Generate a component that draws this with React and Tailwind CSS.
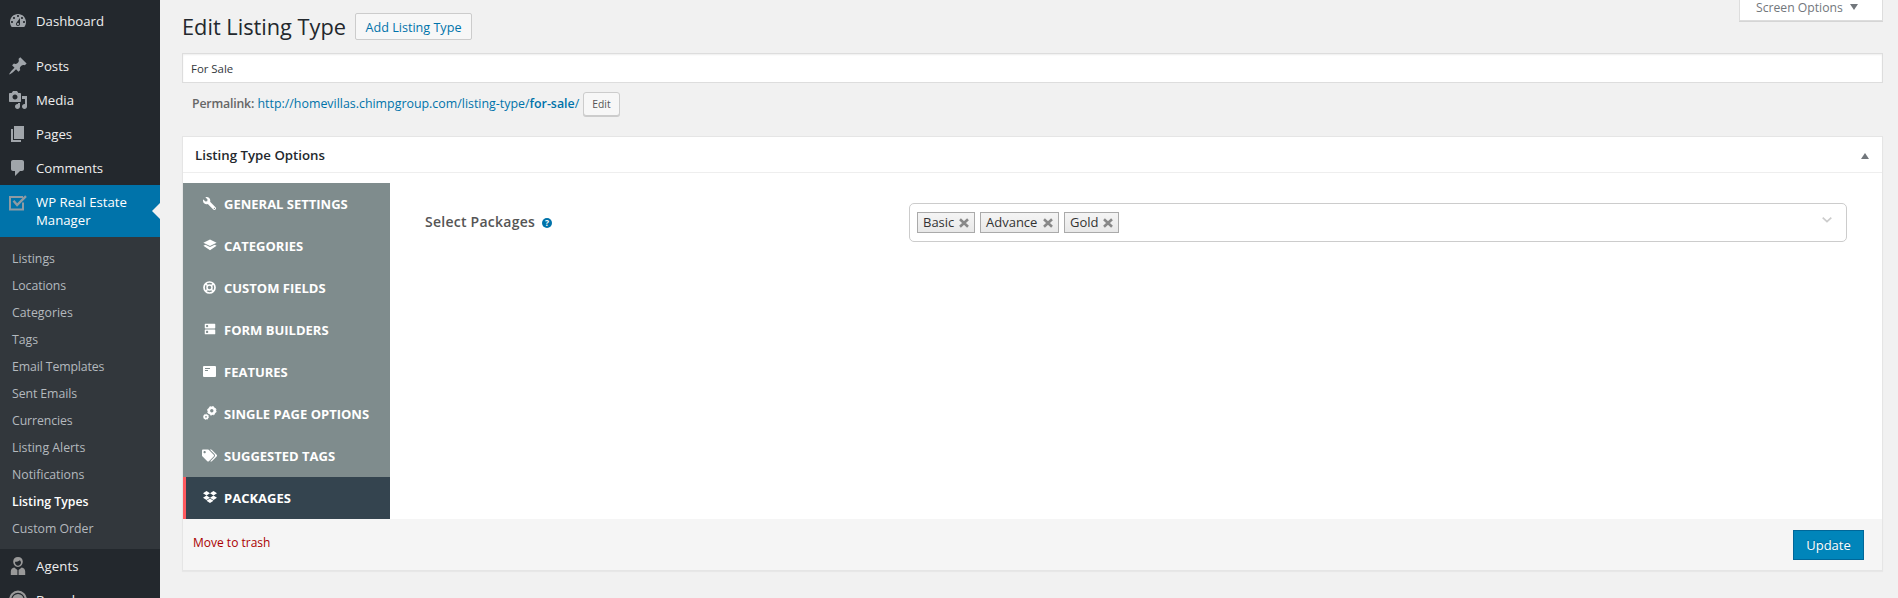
import React from "react";
import { MdDns } from "react-icons/md";
import { FaTags, FaDropbox, FaWrench } from "react-icons/fa";

const Dash = ({ d }) => (
  <svg viewBox="0 0 20 20" className="h-5 w-5 fill-[#a0a5aa]">
    <path fillRule="evenodd" d={d} />
  </svg>
);

const DASHBOARD =
  "M3.76 16h12.48c1.1-1.37 1.76-3.11 1.76-5 0-4.42-3.58-8-8-8s-8 3.58-8 8c0 1.89.66 3.63 1.76 5zM10 4c.55 0 1 .45 1 1s-.45 1-1 1-1-.45-1-1 .45-1 1-1zM6 6c.55 0 1 .45 1 1s-.45 1-1 1-1-.45-1-1 .45-1 1-1zm8 0c.55 0 1 .45 1 1s-.45 1-1 1-1-.45-1-1 .45-1 1-1zm-5.37 5.55L12 7v6c0 1.1-.9 2-2 2s-2-.9-2-2c0-.57.24-1.08.63-1.45zM4 10c.55 0 1 .45 1 1s-.45 1-1 1-1-.45-1-1 .45-1 1-1zm12 0c.55 0 1 .45 1 1s-.45 1-1 1-1-.45-1-1 .45-1 1-1zm-5 3c0-.55-.45-1-1-1s-1 .45-1 1 .45 1 1 1 1-.45 1-1z";
const PIN =
  "M10.44 3.02l1.82-1.82 6.36 6.35-1.83 1.82c-1.05-.68-2.48-.57-3.41.36l-.75.75c-.92.93-1.04 2.35-.35 3.41l-1.83 1.82-2.41-2.41-2.8 2.79c-.42.42-3.38 2.71-3.8 2.29s1.86-3.39 2.28-3.81l2.79-2.79L4.1 9.36l1.83-1.82c1.05.69 2.48.57 3.4-.36l.75-.75c.93-.92 1.05-2.35.36-3.41z";
const MEDIA =
  "M13 11V4c0-.55-.45-1-1-1h-1.67L9 1H5L3.67 3H2c-.55 0-1 .45-1 1v7c0 .55.45 1 1 1h10c.55 0 1-.45 1-1zM7 4.5c1.38 0 2.5 1.12 2.5 2.5S8.38 9.5 7 9.5 4.5 8.38 4.5 7 5.62 4.5 7 4.5zM14 6h5v10.5c0 1.38-1.12 2.5-2.5 2.5S14 17.88 14 16.5s1.12-2.5 2.5-2.5c.17 0 .34.02.5.05V9h-3V6zm-4 8.05V13h2v3.5c0 1.38-1.12 2.5-2.5 2.5S7 17.88 7 16.5 8.12 14 9.5 14c.17 0 .34.02.5.05z";
const PAGES = "M6 15V2h10v13H6zm-1 1h8v2H3V5h2v11z";
const COMMENTS =
  "M5 2h9c1.1 0 2 .9 2 2v7c0 1.1-.9 2-2 2h-2l-5 5v-5H5c-1.1 0-2-.9-2-2V4c0-1.1.9-2 2-2z";

const CheckBoxIcon = () => (
  <svg viewBox="0 0 20 20" className="h-5 w-5" fill="none" stroke="#8f9ba3">
    <path strokeWidth="2" d="M15 10.5V17.500H2V5h13" />
    <path strokeWidth="2.4" d="M5.500 8.800l3.600 4.200L18 4.2" />
  </svg>
);

const AgentIcon = () => (
  <svg viewBox="0 0 20 20" className="h-5 w-5">
    <path fill="#999" fillRule="evenodd" d="M10 1c3 0 4.8 1.8 4.8 4.6 0 3-1.900 5.400-4.800 5.400s-4.800-2.400-4.800-5.400C5.200 2.800 7 1 10 1zm-3 5.800c.3 1.600 1.500 3 3 3s2.700-1.400 3-3c.1-1-.5-2-1.200-2.600-1.300 1-3 1.500-4.600 1.600z" />
    <path fill="#999" d="M6.300 11.600L9.400 14v5H2.800v-3.500c0-2 1.400-3.500 3.500-3.900zM13.700 11.600L10.600 14v5h6.600v-3.500c0-2-1.400-3.500-3.500-3.900z" />
  </svg>
);

const BranchIcon = () => (
  <svg viewBox="0 0 20 20" className="h-5 w-5">
    <circle cx="10" cy="9.500" r="7.800" fill="none" stroke="#999" strokeWidth="2.200" />
    <circle cx="10" cy="9.500" r="5.600" fill="#999" />
  </svg>
);

const LayersIcon = () => (
  <svg viewBox="0 0 14 12" className="h-3 w-[14px]">
    <path fill="#fff" d="M7 .5L13.600 3.700 7 7 .4 3.700z" />
    <path fill="#fff" d="M.4 6.800L2.400 5.800 7 8.100l4.600-2.300 2 1L7 11.200z" />
  </svg>
);

const RingIcon = () => (
  <svg viewBox="0 0 13 13" className="h-[13px] w-[13px]" fill="none" stroke="#fff">
    <circle cx="6.500" cy="6.500" r="5.500" strokeWidth="1.700" />
    <circle cx="6.500" cy="6.500" r="2.500" strokeWidth="1.500" />
    <path strokeWidth="1.500" d="M2.500 2.500l2.200 2.200M10.500 2.500L8.300 4.700M2.500 10.500l2.200-2.200M10.500 10.500L8.300 8.300" />
  </svg>
);

const CardIcon = () => (
  <svg viewBox="0 0 13 13" className="h-[13px] w-[13px]">
    <rect y="1" width="13" height="11" rx="1" fill="#fff" />
    <path stroke="#7f8c8d" d="M2 3.500h5M2 5.500h3" />
  </svg>
);

const CogsIcon = () => (
  <svg viewBox="0 0 14 14" className="h-[14px] w-[14px]" fill="none" stroke="#fff">
    <circle cx="8.800" cy="4.800" r="3" strokeWidth="2.600" />
    <circle cx="8.800" cy="4.800" r="4.300" strokeWidth="1" strokeDasharray="1.690 1.690" />
    <circle cx="3" cy="10.800" r="1.700" strokeWidth="1.700" />
    <circle cx="3" cy="10.800" r="2.600" strokeWidth=".8" strokeDasharray="1.020 1.020" />
  </svg>
);

const TOP_ITEMS = [
  ["Posts", PIN],
  ["Media", MEDIA],
  ["Pages", PAGES],
  ["Comments", COMMENTS],
];

const SUB_ITEMS = [
  ["Listings", ""],
  ["Locations", "tracking-[-0.1px]"],
  ["Categories", ""],
  ["Tags", ""],
  ["Email Templates", "tracking-[-0.12px]"],
  ["Sent Emails", "tracking-[-0.08px]"],
  ["Currencies", "tracking-[-0.1px]"],
  ["Listing Alerts", ""],
  ["Notifications", ""],
  ["Listing Types", "font-semibold text-white"],
  ["Custom Order", ""],
];

const TABS = [
  ["General Settings", <FaWrench size={13} className="-scale-x-100" />],
  ["Categories", <LayersIcon />],
  ["Custom Fields", <RingIcon />],
  ["Form Builders", <MdDns size={14} />],
  ["Features", <CardIcon />],
  ["Single Page Options", <CogsIcon />],
  ["Suggested Tags", <FaTags size={15} />],
  ["Packages", <FaDropbox size={14} />],
];

const MenuRow = ({ icon, children }) => (
  <div className="flex h-[34px] shrink-0 items-start pl-2 text-[13.2px] leading-[18px] text-[#eee]">
    <span className="w-7 shrink-0 pt-[7px]">{icon}</span>
    <span className="pt-2">{children}</span>
  </div>
);

function Sidebar() {
  return (
    <nav className="flex w-40 shrink-0 flex-col overflow-hidden bg-[#23282d] pt-1">
      <MenuRow icon={<Dash d={DASHBOARD} />}>Dashboard</MenuRow>
      <div className="h-[11px] shrink-0" />
      {TOP_ITEMS.map(([name, d]) => (
        <MenuRow key={name} icon={<Dash d={d} />}>
          {name}
        </MenuRow>
      ))}
      <div className="relative flex h-[52px] shrink-0 bg-[#0073aa] pl-2 text-[13.2px] leading-[18px] text-white">
        <span className="w-7 shrink-0 pt-[7px]">
          <CheckBoxIcon />
        </span>
        <span className="pt-2">
          WP Real Estate
          <br />
          Manager
        </span>
        <span className="absolute top-[18px] right-0 border-y-8 border-r-8 border-y-transparent border-r-[#f1f1f1]" />
      </div>
      <ul className="h-[312px] shrink-0 bg-[#32373c] pt-2 pl-3 text-[12.3px] leading-[27px] text-[#b4b9be]">
        {SUB_ITEMS.map(([name, cls]) => (
          <li key={name} className={cls}>
            {name}
          </li>
        ))}
      </ul>
      <MenuRow icon={<AgentIcon />}>
        <span className="tracking-[0.1px]">Agents</span>
      </MenuRow>
      <MenuRow icon={<BranchIcon />}>Branches</MenuRow>
    </nav>
  );
}

const Chip = ({ children, width }) => (
  <span
    className={
      "flex h-[21px] items-center justify-between border border-[#aaa] bg-linear-to-b from-[#f4f4f4] via-[#efefef] to-[#e8e8e8] pr-[5px] pl-[5px] text-[13px] leading-none text-[#333] " +
      width
    }
  >
    {children}
    <svg viewBox="0 0 10 10" className="h-[10px] w-[10px]" stroke="#888" strokeWidth="2.600">
      <path d="M1 1.300l8 7.400M9 1.300l-8 7.400" />
    </svg>
  </span>
);

export default function App() {
  return (
    <div className="flex h-[598px] w-[1898px] overflow-hidden bg-[#f1f1f1] font-['Open_Sans',sans-serif] text-[#444]">
      <Sidebar />
      <main className="flex flex-1 flex-col pr-[15px] pl-[22px]">
        <header className="flex h-[53px] items-start justify-between">
          <div className="flex items-center pt-[13px]">
            <h1 className="w-[173px] text-[21.750px] leading-[27px] whitespace-nowrap text-[#23282d]">
              Edit Listing Type
            </h1>
            <a className="flex h-[27px] w-[117px] items-center justify-center rounded-[2px] border border-[#ccc] bg-[#f7f7f7] pt-[3px] text-[12.6px] font-medium text-[#0073aa]">
              Add Listing Type
            </a>
          </div>
          <button className="flex h-[21px] w-36 items-start border border-t-0 border-[#ddd] bg-white pl-4 text-[12.2px] leading-4 text-[#72777c] shadow-[0_1px_0_0_#d5d5d5]">
            Screen Options
            <span className="mt-1 ml-[7px] border-x-4 border-t-[6px] border-x-transparent border-t-[#72777c]" />
          </button>
        </header>

        <div className="flex h-[30px] items-center border border-[#ddd] bg-white pt-px pl-2 text-[11.4px] text-[#32373c] shadow-[inset_0_1px_2px_rgba(0,0,0,0.07)]">
          For Sale
        </div>

        <div className="mt-[9px] flex h-6 items-center pl-[10px] text-[12.4px] text-[#0073aa]">
          <strong className="w-[65.5px] text-[12.3px] font-semibold tracking-[-0.18px] text-[#666]">
            Permalink:
          </strong>
          <span className="w-[325.5px] whitespace-nowrap">
            http://homevillas.chimpgroup.com/listing-type/
            <b className="font-semibold">for-sale</b>/
          </span>
          <button className="h-6 w-[37px] rounded-[3px] border border-[#ccc] bg-[#f7f7f7] pt-px text-[10.300px] text-[#555] shadow-[0_1px_0_#ccc]">
            Edit
          </button>
        </div>

        <section className="mt-5 border border-[#e5e5e5] bg-white shadow-[0_1px_1px_rgba(0,0,0,0.04)]">
          <div className="flex h-9 items-center justify-between border-b border-[#eee] pr-[13px] pl-3">
            <h2 className="pt-[3px] text-[13.250px] font-semibold text-[#23282d]">Listing Type Options</h2>
            <span className="mt-[3px] border-x-4 border-b-[6px] border-x-transparent border-b-[#72777c]" />
          </div>
          <div className="flex pt-[10px]">
            <ul className="w-[207px] shrink-0 bg-[#7f8c8d] text-[13px] font-bold text-white uppercase">
              {TABS.map(([name, icon], i) => (
                <li
                  key={name}
                  className={
                    "flex h-[42px] items-center " +
                    (i === 7 ? "border-l-3 border-[#ff5a5f] bg-[#34444f] pl-[16px]" : "pl-[19px]")
                  }
                >
                  <span className="mb-0.5 flex w-[15px] justify-center">{icon}</span>
                  <span className="ml-[7px] pt-[2px] whitespace-nowrap">{name}</span>
                </li>
              ))}
            </ul>
            <div className="flex flex-1 items-start pt-5 pr-[35px] pl-[35px]">
              <div className="flex h-[37px] w-[484px] items-center">
                <label className="text-[14px] font-semibold tracking-[0.25px] text-[#555]">Select Packages</label>
                <span className="mt-[3px] ml-[7px] flex h-[10px] w-[10px] items-center justify-center rounded-full bg-[#0073aa] text-[8.500px] leading-none font-bold text-white">
                  ?
                </span>
              </div>
              <div className="flex h-[39px] flex-1 items-center gap-[5px] rounded-[5px] border border-[#ccc] pr-[14px] pl-[7px]">
                <Chip width="w-[58px]">Basic</Chip>
                <Chip width="w-[79px]">Advance</Chip>
                <Chip width="w-[55px]">Gold</Chip>
                <svg viewBox="0 0 10 6" className="mb-1.5 ml-auto h-[6px] w-[10px]" fill="none" stroke="#ccc" strokeWidth="1.700">
                  <path d="M.7.7L5 4.700 9.300.7" />
                </svg>
              </div>
            </div>
          </div>
          <div className="flex h-[51px] items-start justify-between bg-[#f5f5f5] pt-[11px] pr-[18px] pl-[10px]">
            <a className="pt-1 text-[12px] leading-[18px] text-[#a00]">Move to trash</a>
            <button className="h-[30px] w-[71px] border border-[#006799] bg-[#0085ba] pt-[2px] text-[13px] text-white [text-shadow:0_-1px_1px_#006799]">
              Update
            </button>
          </div>
        </section>
      </main>
    </div>
  );
}
